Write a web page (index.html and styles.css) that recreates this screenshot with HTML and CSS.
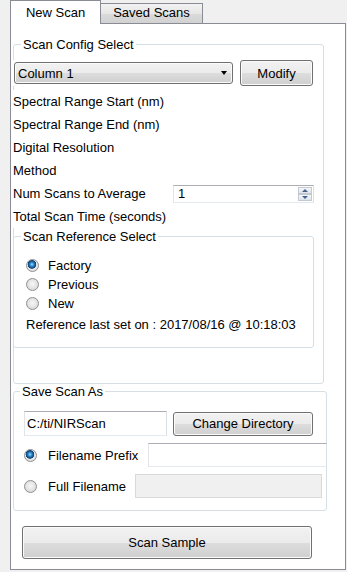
FILE: index.html
```html
<!DOCTYPE html>
<html lang="en">
<head>
    <meta charset="UTF-8">
    <meta name="viewport" content="width=device-width, initial-scale=1.0">
    <title>New Scan</title>
    <link rel="stylesheet" href="styles.css">
</head>
<body>
    <div class="tabs">
        <div class="tab active">New Scan</div>
        <div class="tab">Saved Scans</div>
    </div>
    <div class="pane">
        <fieldset class="group config">
            <legend>Scan Config Select</legend>
            <div class="config-body">
                <div class="config-row">
                    <div class="combo">Column 1<span class="arrow"></span></div>
                    <button class="btn modify">Modify</button>
                </div>
                <div class="fields">
                    <div class="field">Spectral Range Start (nm)</div>
                    <div class="field">Spectral Range End (nm)</div>
                    <div class="field">Digital Resolution</div>
                    <div class="field">Method</div>
                    <div class="field spin-row">
                        <span>Num Scans to Average</span>
                        <div class="spin">
                            <span class="spin-value">1</span>
                            <span class="spin-btns">
                                <span class="spin-btn up"></span>
                                <span class="spin-btn down"></span>
                            </span>
                        </div>
                    </div>
                    <div class="field">Total Scan Time (seconds)</div>
                </div>
                <fieldset class="group ref">
                    <legend>Scan Reference Select</legend>
                    <div class="ref-body">
                        <label class="radio-row"><input type="radio" name="ref" checked><span>Factory</span></label>
                        <label class="radio-row"><input type="radio" name="ref"><span>Previous</span></label>
                        <label class="radio-row"><input type="radio" name="ref"><span>New</span></label>
                        <div class="ref-note">Reference last set on : 2017/08/16 @ 10:18:03</div>
                    </div>
                </fieldset>
            </div>
        </fieldset>
        <fieldset class="group save">
            <legend>Save Scan As</legend>
            <div class="save-body">
                <div class="save-row">
                    <input class="text dir" type="text" value="C:/ti/NIRScan">
                    <button class="btn change-dir">Change Directory</button>
                </div>
                <div class="save-row">
                    <label class="radio-row"><input type="radio" name="fname" checked><span>Filename Prefix</span></label>
                    <input class="text prefix" type="text">
                </div>
                <div class="save-row">
                    <label class="radio-row"><input type="radio" name="fname"><span>Full Filename</span></label>
                    <input class="text full" type="text" disabled>
                </div>
            </div>
        </fieldset>
        <button class="btn scan">Scan Sample</button>
    </div>
</body>
</html>
```

FILE: styles.css
```css
body {
    margin: 0;
    background-color: #f0f0f0;
    font-family: "Liberation Sans", Arial, sans-serif;
    font-size: 13px;
    color: #000;
}
.tabs {
    display: flex;
    align-items: flex-end;
    height: 23px;
    margin-left: 10px;
}
.tab {
    box-sizing: border-box;
    border: 1px solid #898c95;
    border-bottom: none;
    line-height: 18px;
    text-align: center;
}
.tab.active {
    position: relative;
    z-index: 1;
    width: 91px;
    height: 24px;
    margin-bottom: -1px;
    padding-top: 3px;
    background-color: #fff;
}
.tab:not(.active) {
    width: 102px;
    height: 20px;
    border-left: none;
    background: linear-gradient(#f3f3f3, #e6e6e6 50%, #dadada 51%, #d2d2d2);
}
.pane {
    box-sizing: border-box;
    width: 336px;
    height: 547px;
    margin-left: 10px;
    padding: 13px 0 0 2px;
    border: 1px solid #898c95;
    background-color: #fff;
}
.group {
    margin: 0;
    padding: 0;
    min-width: 0;
    border: 1px solid #d5dfe5;
    border-radius: 3px;
}
.group legend {
    margin-left: 7px;
    padding: 0 2px;
    line-height: 15px;
}
.config {
    box-sizing: border-box;
    width: 311px;
    padding: 0 9px 35px 0;
}
.config-body {
    margin-left: -1px;
}
.config-row {
    display: flex;
    align-items: center;
    margin-top: 8px;
    height: 26px;
    background-color: #fff;
}
.combo {
    box-sizing: border-box;
    display: flex;
    align-items: center;
    justify-content: space-between;
    width: 219px;
    height: 22px;
    margin-left: 1px;
    padding: 0 5px 0 3px;
    border: 1px solid #707070;
    border-radius: 3px;
    background: linear-gradient(#f2f2f2, #ebebeb 50%, #dddddd 51%, #cfcfcf);
    box-shadow: inset 0 0 0 1px #fbfbfb;
}
.arrow {
    width: 0;
    height: 0;
    border-top: 4px solid #000;
    border-left: 3.5px solid transparent;
    border-right: 3.5px solid transparent;
}
.btn {
    box-sizing: border-box;
    padding: 0;
    border: 1px solid #707070;
    border-radius: 3px;
    background: linear-gradient(#f2f2f2, #ebebeb 50%, #dddddd 51%, #cfcfcf);
    box-shadow: inset 0 0 0 1px #fbfbfb;
    font: inherit;
    color: #000;
}
.modify {
    width: 73px;
    height: 26px;
    margin-left: 7px;
}
.fields {
    margin-top: 4px;
}
.field {
    height: 23px;
    line-height: 23px;
    background-color: #fff;
}
.spin-row {
    display: flex;
    align-items: center;
}
.spin {
    box-sizing: border-box;
    display: flex;
    align-items: center;
    justify-content: space-between;
    width: 141px;
    height: 18px;
    margin-left: auto;
    padding: 0 1px 0 4px;
    border: 1px solid;
    border-color: #abadb3 #dbdfe6 #e3e9ef #e2e3ea;
    line-height: 16px;
}
.spin-btns {
    display: flex;
    flex-direction: column;
}
.spin-btn {
    box-sizing: border-box;
    display: flex;
    align-items: center;
    justify-content: center;
    width: 14px;
    height: 7px;
    border: 1px solid #c2c9d3;
    background: linear-gradient(#f6f7f9, #dfe4ea);
}
.spin-btn::after {
    content: "";
    width: 0;
    height: 0;
    border-left: 3.5px solid transparent;
    border-right: 3.5px solid transparent;
}
.spin-btn.up::after {
    border-bottom: 3px solid #45628a;
}
.spin-btn.down::after {
    border-top: 3px solid #45628a;
}
.ref {
    margin-top: 1px;
}
.ref-body {
    padding: 12px 0 13px 12px;
}
.radio-row {
    display: flex;
    align-items: center;
    height: 19px;
}
input[type="radio"] {
    appearance: none;
    box-sizing: border-box;
    width: 13px;
    height: 13px;
    margin: 0 9px 0 0;
    border: 1px solid #8e8f8f;
    border-radius: 50%;
    background: radial-gradient(circle at 50% 45%, #f8f8f8 0, #e2e2e2 55%, #cfcfcf 100%);
}
input[type="radio"]:checked {
    background: radial-gradient(circle at 45% 40%, #a9e2ff 0, #3a9ce0 1.5px, #1a5f9e 3px, #0d3f70 4px, #e9e9e9 4.6px, #d6d6d6 100%);
}
.ref-note {
    margin-top: 2px;
    line-height: 19px;
}
.save {
    box-sizing: border-box;
    width: 314px;
}
.save legend {
    margin-left: 6px;
}
.save-body {
    padding: 12px 13px 12px 10px;
}
.save-row {
    display: flex;
    align-items: center;
    height: 24px;
    margin-top: 7px;
}
.save-row:first-child {
    height: 25px;
    margin-top: 0;
}
.save-row input[type="radio"] {
    margin-right: 11px;
}
.text {
    box-sizing: border-box;
    margin: 0;
    padding: 0 2px;
    border: 1px solid;
    border-color: #abadb3 #dbdfe6 #e3e9ef #e2e3ea;
    background-color: #fff;
    font: inherit;
    color: #000;
    outline: none;
}
.dir {
    width: 143px;
    height: 25px;
}
.change-dir {
    width: 140px;
    height: 24px;
    margin-left: 6px;
}
.prefix {
    width: 179px;
    height: 24px;
    margin: 0 -14px 0 auto;
}
.full {
    width: 187px;
    height: 24px;
    margin: 0 -9px 0 auto;
    background-color: #f0f0f0;
    border-color: #d9d9d9;
}
.scan {
    display: block;
    width: 290px;
    height: 33px;
    margin: 15px 0 0 9px;
}
```
